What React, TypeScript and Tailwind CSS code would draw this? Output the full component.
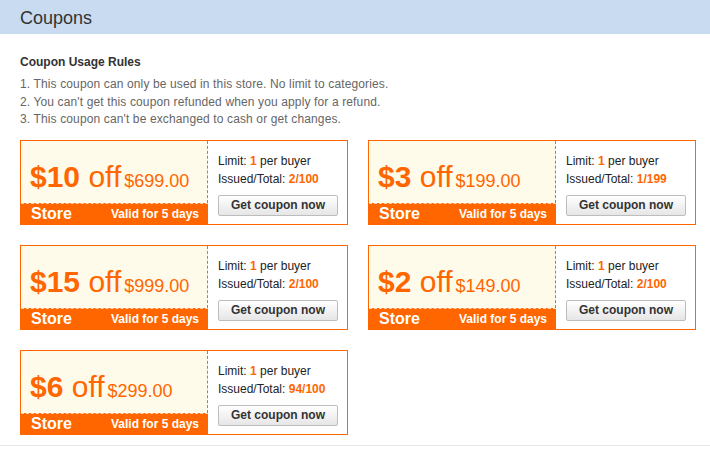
import React from 'react';

interface Coupon {
  amount: number;
  minSpend: string;
  issued: number;
  total: number;
}

const coupons: Coupon[] = [
  { amount: 10, minSpend: '$699.00', issued: 2, total: 100 },
  { amount: 3, minSpend: '$199.00', issued: 1, total: 199 },
  { amount: 15, minSpend: '$999.00', issued: 2, total: 100 },
  { amount: 2, minSpend: '$149.00', issued: 2, total: 100 },
  { amount: 6, minSpend: '$299.00', issued: 94, total: 100 },
];

const rules = [
  '1. This coupon can only be used in this store. No limit to categories.',
  "2. You can't get this coupon refunded when you apply for a refund.",
  "3. This coupon can't be exchanged to cash or get changes.",
];

const CouponCard: React.FC<{ coupon: Coupon }> = ({ coupon }) => {
  return (
    <div className="flex h-[85px] w-[328px] border border-[#ff6600] bg-white">
      <div className="flex w-[187px] flex-col">
        <div className="flex-1 border-r border-dashed border-[#ff6600] bg-[#fffbeb] pl-[9px] pt-[21px] leading-[30px] text-[#ff6600] whitespace-nowrap">
          <span className="text-[30px] font-bold">${coupon.amount}</span>
          <span className="text-[30px]"> off</span>
          <span className="ml-[3px] text-[18px]">{coupon.minSpend}</span>
        </div>
        <div className="flex h-[21px] items-center justify-between border-t border-dashed border-[#ffd2b0] bg-[#ff6600] pl-[10px] pr-[9px] font-bold text-white">
          <span className="text-[16px] leading-none">Store</span>
          <span className="text-[12px] leading-none">Valid for 5 days</span>
        </div>
      </div>
      <div className="flex-1 pl-[10px] pt-[11px] text-[12px] leading-[18px] text-[#222]">
        <div>
          Limit: <span className="font-bold text-[#ff6600]">1</span> per buyer
        </div>
        <div>
          Issued/Total:{' '}
          <span className="font-bold text-[#ff6600]">
            {coupon.issued}/{coupon.total}
          </span>
        </div>
        <button className="mt-[7px] flex h-[21px] w-[120px] items-center justify-center rounded-[2px] border border-[#bdbdbd] bg-gradient-to-b from-white to-[#e6e6e6] text-[12px] font-bold text-[#333]">
          Get coupon now
        </button>
      </div>
    </div>
  );
};

const App: React.FC = () => {
  return (
    <div className="h-[470px] w-[710px] bg-white font-['Liberation_Sans',Arial,sans-serif]">
      <div className="flex h-[34px] items-center bg-[#c8dbf0] pl-[20px] pt-[3px] text-[18px] text-[#333]">
        Coupons
      </div>
      <div className="px-[20px] pt-[19px]">
        <h3 className="text-[12px] font-bold leading-[18px] text-[#333]">Coupon Usage Rules</h3>
        <div className="mt-[5px] text-[12px] leading-[17.5px] tracking-[0.13px] text-[#666]">
          {rules.map(rule => (
            <div key={rule}>{rule}</div>
          ))}
        </div>
        <div className="mt-[11px] grid grid-cols-[328px_328px] gap-[20px]">
          {coupons.map((c, i) => (
            <CouponCard key={i} coupon={c} />
          ))}
        </div>
      </div>
      <div className="mt-[10px] h-px bg-[#e6e6e6]" />
    </div>
  );
};

export default App;
